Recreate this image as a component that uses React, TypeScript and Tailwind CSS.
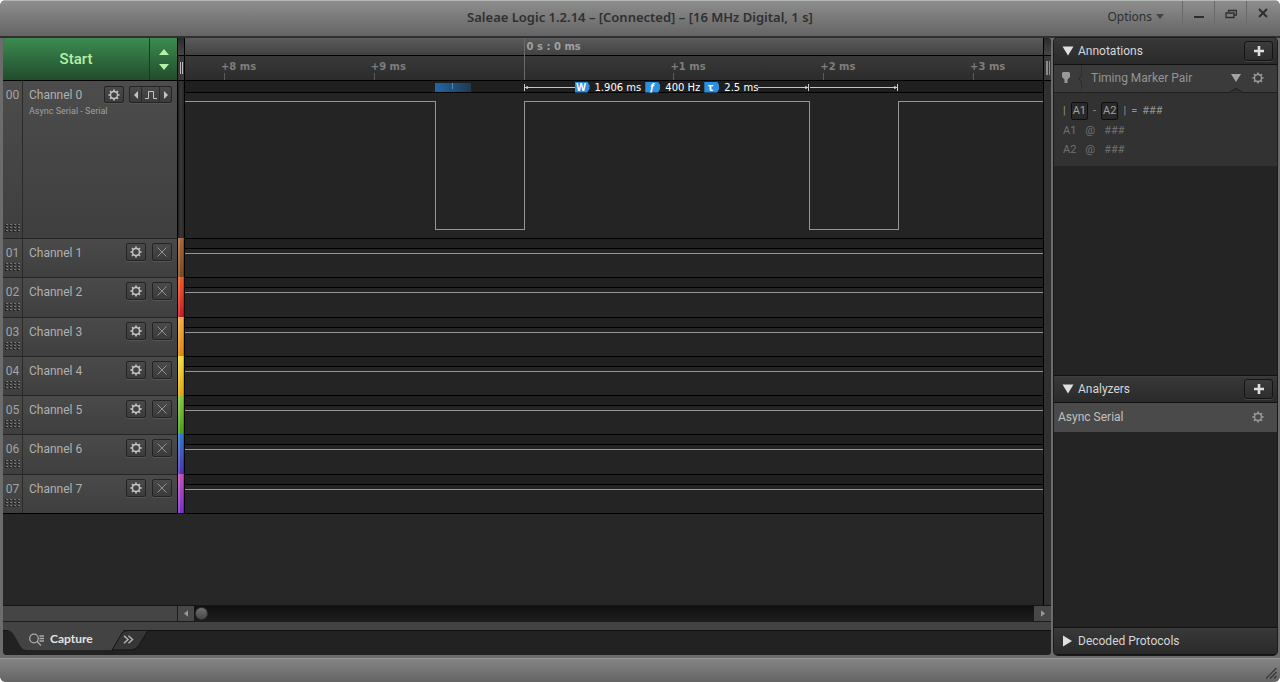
import React from "react";

const AXIS_WIDTH = 859;
const percent = (x: number) => `${(x / AXIS_WIDTH) * 100}%`;

const channels = [
  { id: "01", name: "Channel 1", stripe: "from-[#a8693c] to-[#7a4a22]" },
  { id: "02", name: "Channel 2", stripe: "from-[#ee5a26] to-[#c8142c]" },
  { id: "03", name: "Channel 3", stripe: "from-[#f2b23c] to-[#dd8512]" },
  { id: "04", name: "Channel 4", stripe: "from-[#f2e03c] to-[#e0a414]" },
  { id: "05", name: "Channel 5", stripe: "from-[#8ac83c] to-[#4c9a1e]" },
  { id: "06", name: "Channel 6", stripe: "from-[#2f78c8] to-[#4a32b0]" },
  { id: "07", name: "Channel 7", stripe: "from-[#c052b4] to-[#7c2cc8]" },
];

const ticks = [
  { x: 39, label: "+8 ms" },
  { x: 189, label: "+9 ms" },
  { x: 489, label: "+1 ms" },
  { x: 639, label: "+2 ms" },
  { x: 789, label: "+3 ms" },
];

function Gear({ className = "" }: { className?: string }) {
  return (
    <svg viewBox="0 0 12 12" className={`size-3 ${className}`} fill="none" stroke="currentColor" aria-hidden="true">
      <circle cx="6" cy="6" r="3.500" strokeWidth="1.400" />
      {[0, 45, 90, 135, 180, 225, 270, 315].map((a) => (
        <path key={a} d="M6 2.200V.4" strokeWidth="1.700" transform={`rotate(${a} 6 6)`} />
      ))}
    </svg>
  );
}

function Grip() {
  return (
    <svg viewBox="0 0 15 8" className="h-2 w-[15px]" aria-hidden="true">
      {[0, 4, 8, 12].map((x) =>
        [0, 3, 6].map((y) => (
          <g key={`${x}-${y}`}>
            <rect x={x} y={y} width="2" height="2" fill="#242424" />
            <rect x={x + 1} y={y} width="2" height="1" fill="#777" />
          </g>
        )),
      )}
    </svg>
  );
}

const smallButton =
  "flex items-center justify-center rounded-[2px] border border-[#242424] bg-linear-to-b from-[#4a4a4a] to-[#3b3b3b] text-[#c4c4c4] shadow-[0_1px_0_#555]";

function ChannelNumber({ id }: { id: string }) {
  return (
    <div className="flex w-5 shrink-0 flex-col items-center justify-between border-r border-[#2b2b2b] pt-[6px] pb-[6px] text-[12px] leading-4 text-[#a4a4a4]">
      <span>{id}</span>
      <Grip />
    </div>
  );
}

function ChannelRow({ id, name, stripe }: { id: string; name: string; stripe: string }) {
  return (
    <div className="flex min-h-0 flex-1">
      <div className="flex w-[174px] shrink-0 border-t border-[#252525] bg-linear-to-b from-[#4a4a4a] to-[#3f3f3f]">
        <ChannelNumber id={id} />
        <div className="flex flex-1 items-start pt-[4px] pr-[5px] pl-[6px]">
          <span className="flex-1 pt-[2px] text-[12px] leading-4 text-[#b0b0b0]">{name}</span>
          <button aria-label={`${name} settings`} className={`${smallButton} h-[18px] w-5`}>
            <Gear />
          </button>
          <button aria-label={`Hide ${name}`} className={`${smallButton} ml-[6px] h-[18px] w-5`}>
            <svg viewBox="0 0 10 10" className="size-[10px]" stroke="#929292" aria-hidden="true">
              <path d="M.5.5l9 9M9.500.5l-9 9" />
            </svg>
          </button>
        </div>
      </div>
      <div className="w-2 shrink-0 border-x border-black bg-black">
        <div className={`h-full border-r border-l-2 border-r-black/20 border-l-white/15 bg-linear-to-b ${stripe}`} />
      </div>
      <div className="flex-1 border-t border-black bg-[#242424]">
        <div className="h-[10px] border-b border-black bg-[#202020]" />
        <div className="h-1" />
        <div className="h-px bg-[#969696]" />
      </div>
    </div>
  );
}

function Tag({ children }: { children: React.ReactNode }) {
  return (
    <span className="flex h-[11px] w-[15px] items-center justify-center bg-[#2d8fe0] pr-[2px] font-['Noto_Sans',sans-serif] text-[10px] leading-[10px] font-bold text-white [clip-path:polygon(0_0,85%_0,100%_35%,100%_65%,85%_100%,0_100%)]">
      {children}
    </span>
  );
}

function PanelHeader({ title, add = false }: { title: string; add?: boolean }) {
  return (
    <div className="flex h-[27px] shrink-0 items-center justify-between border-y border-t-[#3d3d3d] border-b-[#111] bg-linear-to-b from-[#383838] to-[#2a2a2a] pr-1 pb-px pl-2">
      <button className="flex items-center gap-[4px] text-[12px] leading-4 text-[#d6d6d6]">
        <svg viewBox="0 0 12 12" className="size-3 fill-[#e0e0e0]" aria-hidden="true">
          {add ? <path d="M.5 1.500h11L6 10.500z" /> : <path d="M1 .5v11L10 6z" />}
        </svg>
        {title}
      </button>
      {add && (
        <button
          aria-label={`Add to ${title}`}
          className="flex h-5 w-[29px] items-center justify-center rounded-[3px] border border-[#151515] bg-linear-to-b from-[#3c3c3c] to-[#2d2d2d] shadow-[0_1px_0_#444]"
        >
          <svg viewBox="0 0 10 10" className="size-[10px] fill-[#dedede]" aria-hidden="true">
            <path d="M3.700 0h2.600v3.700H10v2.600H6.300V10H3.700V6.300H0V3.700h3.700z" />
          </svg>
        </button>
      )}
    </div>
  );
}

function TitleBar() {
  const control = "flex h-[23px] w-8 items-center justify-center border-l border-[#686868] text-[#2e2e2e]";
  return (
    <header className="relative flex h-9 shrink-0 items-start justify-end border-t border-[#b4b8b4] bg-linear-to-b from-[#8e8e8e] to-[#646464] pr-[2px] font-['Noto_Sans',sans-serif]">
      <h1 className="absolute inset-x-0 top-[7px] text-center text-[13px] leading-[18px] font-semibold text-[#303030]">
        Saleae Logic 1.2.14 – [Connected] – [16 MHz Digital, 1 s]
      </h1>
      <button className="relative mr-[18px] flex h-[31px] items-center gap-1 text-[12px] text-[#2e2e2e]">
        Options
        <svg viewBox="0 0 8 5" className="h-[5px] w-2 fill-[#444]" aria-hidden="true">
          <path d="M0 0h8L4 5z" />
        </svg>
      </button>
      <button aria-label="Minimize" className={`relative ${control}`}>
        <svg viewBox="0 0 12 12" className="size-3" fill="currentColor" aria-hidden="true">
          <path d="M1 9h10v2H1z" />
        </svg>
      </button>
      <button aria-label="Restore" className={`relative ${control}`}>
        <svg viewBox="0 0 12 12" className="size-3" fill="none" stroke="currentColor" strokeWidth="1.300" aria-hidden="true">
          <path d="M3.500 5V3.500h8v4.500H9.500M1 6h8v4.500H1z" />
        </svg>
      </button>
      <button aria-label="Close" className={`relative ${control}`}>
        <svg viewBox="0 0 12 12" className="size-3" stroke="currentColor" strokeWidth="2" aria-hidden="true">
          <path d="M2 2l8 8M10 2l-8 8" />
        </svg>
      </button>
    </header>
  );
}

function Ruler() {
  return (
    <div className="relative flex-1 font-['DejaVu_Sans',sans-serif] text-[10px] leading-3 font-bold text-[#7e7e7e]">
      <div className="h-[18px] border-b border-black bg-linear-to-b from-[#5b5b5b] to-[#424242]" />
      <div className="h-[25px] border-b border-black bg-linear-to-b from-[#393939] to-[#2c2c2c]" />
      <div className="absolute top-0 bottom-px border-l border-[#6a6a6a] pt-[3px] pl-[2px] text-[#a0a0a0]" style={{ left: percent(339) }}>
        0 s : 0 ms
      </div>
      {ticks.map((t) => (
        <div key={t.label} className="absolute top-[23px] -ml-[3px]" style={{ left: percent(t.x) }}>
          {t.label}
          <div className="ml-[3px] h-[7px] w-px bg-[#5a5a5a]" />
        </div>
      ))}
    </div>
  );
}

function Waveform() {
  return (
    <div className="relative flex-1 bg-[#242424]">
      <div className="h-3 border-b border-black bg-[#1f1f1f]" />
      <svg
        viewBox="0 0 859 145"
        preserveAspectRatio="none"
        className="h-[145px] w-full"
        fill="none"
        stroke="#969696"
        shapeRendering="crispEdges"
        aria-hidden="true"
      >
        <path d="M0 8.500H250.500V136.500H339.500V8.500H625.500V136.500H714.500V8.500H859" vectorEffect="non-scaling-stroke" />
      </svg>
      <div className="absolute top-[2px] h-[9px] w-9 bg-linear-to-r from-[#1f67a5] to-[#20384f]" style={{ left: percent(250) }}>
        <div className="ml-[17px] h-1.5 w-px bg-[#4a8dc4]" />
      </div>
      <div
        className="absolute top-0 flex h-3 items-center font-['DejaVu_Sans',sans-serif] text-[10px] leading-3 text-white"
        style={{ left: percent(339), width: percent(286) }}
      >
        <svg viewBox="0 0 6 7" className="h-[7px] w-[6px] shrink-0" stroke="#ccc" fill="#ccc" aria-hidden="true">
          <path d="M.5 0v7M1 3.500h5M1.500 3.500l2-1v2z" />
        </svg>
        <div className="h-px flex-1 bg-[#c4c4c4]" />
        <Tag>W</Tag>
        <span className="mr-1 ml-[5px] pt-[2px]">1.906 ms</span>
        <Tag>
          <i>f</i>
        </Tag>
        <span className="mr-1 ml-[5px] pt-[2px]">400 Hz</span>
        <Tag>τ</Tag>
        <span className="ml-[5px] pt-[2px]">2.5 ms</span>
        <div className="h-px flex-1 bg-[#c4c4c4]" />
        <svg viewBox="0 0 6 7" className="h-[7px] w-[6px] shrink-0" stroke="#ccc" fill="#ccc" aria-hidden="true">
          <path d="M5.500 0v7M0 3.500h5M4.500 3.500l-2-1v2z" />
        </svg>
      </div>
      <div className="absolute top-0 flex h-3 items-center" style={{ left: percent(626), width: percent(88) }}>
        <div className="h-px flex-1 bg-[#c4c4c4]" />
        <svg viewBox="0 0 6 7" className="h-[7px] w-[6px] shrink-0" stroke="#ccc" fill="#ccc" aria-hidden="true">
          <path d="M5.500 0v7M0 3.500h5M4.500 3.500l-2-1v2z" />
        </svg>
      </div>
    </div>
  );
}

function Capture() {
  return (
    <main className="flex min-w-0 flex-1 flex-col overflow-hidden rounded-[4px] bg-[#272727]">
      <div className="flex min-h-0 flex-1">
        <div className="flex min-w-0 flex-1 flex-col">
          <div className="flex h-[43px] shrink-0">
            <div className="flex w-[174px] border-b border-black bg-linear-to-b from-[#3c8c50] via-[#2f6b3f] to-[#214d2b] text-[#b4f0a8]">
              <button className="w-[147px] border-r border-[#193d21] text-[15px] font-medium">Start</button>
              <div className="flex flex-1 flex-col items-center justify-center gap-[9px]">
                <button aria-label="Increase duration">
                  <svg viewBox="0 0 10 6" className="h-[6px] w-[10px] fill-current" aria-hidden="true"><path d="M0 6h10L5 0z" /></svg>
                </button>
                <button aria-label="Decrease duration">
                  <svg viewBox="0 0 10 6" className="h-[6px] w-[10px] fill-current" aria-hidden="true"><path d="M0 0h10L5 6z" /></svg>
                </button>
              </div>
            </div>
            <div className="w-2 border-x border-black">
              <div className="h-[18px] border-b border-black bg-linear-to-b from-[#2b2b2b] to-[#454545]" />
              <div className="flex h-[25px] items-center justify-center gap-px border-b border-black bg-[#393939]">
                <div className="h-3 w-px bg-[#b8b8b8]" />
                <div className="h-3 w-px bg-[#b8b8b8]" />
              </div>
            </div>
            <Ruler />
          </div>

          <div className="flex h-[157px] shrink-0">
            <div className="flex w-[174px] shrink-0 bg-linear-to-b from-[#4c4c4c] to-[#3f3f3f]">
              <ChannelNumber id="00" />
              <div className="flex-1 pt-[5px] pr-[5px] pl-[6px]">
                <div className="flex items-start">
                  <span className="flex-1 pt-px text-[12px] leading-4 text-[#b0b0b0]">Channel 0</span>
                  <button aria-label="Channel 0 settings" className={`${smallButton} h-[17px] w-5`}>
                    <Gear />
                  </button>
                  <div className={`${smallButton} ml-[5px] h-[17px] w-[43px]`}>
                    <button aria-label="Previous edge" className="flex h-full w-3 items-center justify-center border-r border-[#2b2b2b]">
                      <svg viewBox="0 0 4 8" className="h-2 w-1 fill-current" aria-hidden="true"><path d="M4 0v8L0 4z" /></svg>
                    </button>
                    <button aria-label="Pulse trigger" className="flex h-full flex-1 items-center justify-center border-r border-[#2b2b2b]">
                      <svg viewBox="0 0 12 8" className="h-2 w-3" fill="none" stroke="currentColor" aria-hidden="true"><path d="M0 7.500h3.500v-7h5v7H12" /></svg>
                    </button>
                    <button aria-label="Next edge" className="flex h-full w-[11px] items-center justify-center">
                      <svg viewBox="0 0 4 8" className="h-2 w-1 fill-current" aria-hidden="true"><path d="M0 0v8l4-4z" /></svg>
                    </button>
                  </div>
                </div>
                <div className="pt-[2px] text-[9px] leading-3 text-[#a0a0a0]">Async Serial - Serial</div>
              </div>
            </div>
            <div className="w-2 shrink-0 border-x border-black bg-linear-to-r from-[#222] via-[#3a3a3a] to-[#262626]" />
            <Waveform />
          </div>

          <div className="flex h-[275px] shrink-0 flex-col">
            {channels.map((c) => (
              <ChannelRow key={c.id} {...c} />
            ))}
          </div>
          <div className="flex-1 border-t border-black" />
        </div>
        <div className="flex w-2 shrink-0 flex-col border-l border-black bg-[#303030]">
          <div className="h-[18px] border-b border-black bg-linear-to-b from-[#2b2b2b] to-[#454545]" />
          <div className="flex h-[25px] items-center justify-center gap-px border-b border-black bg-[#393939]">
            <div className="h-[14px] w-[2px] bg-[#8a8a8a]" />
            <div className="h-[14px] w-px bg-[#8a8a8a]" />
          </div>
        </div>
      </div>

      <div className="flex h-[15px] shrink-0 bg-[#454545] shadow-[0_-1px_0_#151515]">
        <div className="w-[175px] border-r border-[#1c1c1c]" />
        <button aria-label="Scroll left" className="flex w-4 items-center justify-center bg-[#484848]">
          <svg viewBox="0 0 5 8" className="h-[7px] w-1 fill-[#999]" aria-hidden="true"><path d="M5 0v8L0 4z" /></svg>
        </button>
        <div className="flex flex-1 items-center bg-linear-to-b from-[#101010] to-[#1e1e1e]">
          <div className="ml-px size-[13px] rounded-full border border-[#333] bg-linear-to-b from-[#707070] to-[#484848]" />
        </div>
        <button aria-label="Scroll right" className="flex w-[17px] items-center justify-center bg-[#484848]">
          <svg viewBox="0 0 5 8" className="h-[7px] w-1 fill-[#999]" aria-hidden="true"><path d="M0 0v8l5-4z" /></svg>
        </button>
      </div>

      <div className="h-[9px] shrink-0 border-t border-[#1c1c1c] bg-[#434343]" />
      <div className="relative flex h-[25px] shrink-0 items-start bg-[#222] shadow-[inset_0_1px_0_#111]">
        <svg viewBox="0 0 150 25" className="absolute top-0 left-0 h-[25px] w-[150px]" aria-hidden="true">
          <path d="M4 0Q9 1 11 5L18 17Q20 20 24 20H109L121 0z" fill="#434343" />
          <path d="M109 20L119 3Q121 .5 125 .5H145L136 15Q133 20 128 20z" fill="#363636" stroke="#151515" />
        </svg>
        <button className="relative ml-[26px] flex h-[18px] items-center gap-[6px] font-[Lato,sans-serif] text-[12px] font-bold text-[#e2e2e2]">
          <svg viewBox="0 0 15 13" className="h-[13px] w-[15px]" fill="none" stroke="#aaa" strokeWidth="1.300" aria-hidden="true">
            <circle cx="5" cy="5.500" r="4.300" />
            <path d="M8 8.500l4 4M10.500 3H15M10.500 5.500H15M10.500 8H15" />
          </svg>
          Capture
        </button>
        <button aria-label="More tabs" className="relative ml-[30px] flex h-[19px] items-center">
          <svg viewBox="0 0 11 9" className="h-[9px] w-[11px]" fill="none" stroke="#b0b0b0" strokeWidth="1.500" aria-hidden="true">
            <path d="M1 .7l4 3.800-4 3.800M5.500.7l4 3.800-4 3.800" />
          </svg>
        </button>
      </div>
    </main>
  );
}

function Sidebar() {
  const marker = "rounded-[2px] border border-[#0e0e0e] bg-[#292929] px-px text-[#a0a0a0]";
  return (
    <aside className="flex w-[223px] shrink-0 flex-col overflow-hidden rounded-[4px] bg-[#242424] shadow-[0_0_0_1px_#1c1c1c]">
      <section className="flex grow-[338] basis-0 flex-col">
        <PanelHeader title="Annotations" add />
        <div className="relative flex h-7 shrink-0 items-center border-b border-[#202020] bg-[#3b3b3b] pb-px">
          <div className="flex h-full w-7 items-center border-r border-[#303030] pl-2">
            <svg viewBox="0 0 8 12" className="h-3 w-2 fill-[#999]" aria-hidden="true">
              <path d="M1 0h6l1 1v4L5.500 7.500V11h-3V7.500L0 5V1z" />
            </svg>
          </div>
          <svg viewBox="0 0 4 8" className="absolute top-[10px] left-6 h-2 w-1" fill="#3b3b3b" stroke="#2a2a2a" aria-hidden="true">
            <path d="M4 0L1 4l3 4" />
          </svg>
          <select
            aria-label="Annotation type"
            className="h-full flex-1 appearance-none bg-transparent pl-[9px] text-[12px] text-[#949494] outline-none"
          >
            <option>Timing Marker Pair</option>
          </select>
          <svg viewBox="0 0 10 8" className="pointer-events-none mr-[11px] h-2 w-[10px] fill-[#a4a4a4]" aria-hidden="true">
            <path d="M0 0h10L5 8z" />
          </svg>
          <button aria-label="Annotation settings" className="mr-[13px] text-[#999]"><Gear /></button>
          <svg viewBox="0 0 14 5" className="absolute right-[34px] -bottom-px h-[5px] w-[14px]" fill="#333" stroke="#202020" aria-hidden="true">
            <path d="M0 4.500l7-4 7 4" />
          </svg>
        </div>
        <div className="h-[73px] shrink-0 bg-[#323232] pt-[8px] pl-[9px] text-[11px] leading-4 text-[#707070]">
          <div className="mb-px flex h-[19px] items-center gap-[5px] text-[#949494]">
            <span>|</span><span className={marker}>A1</span><span>-</span><span className={marker}>A2</span>
            <span>|</span><span>=</span><span>###</span>
          </div>
          <div className="flex h-[19px] items-center gap-[9px]"><span>A1</span><span>@</span><span>###</span></div>
          <div className="flex h-5 items-center gap-[9px]"><span>A2</span><span>@</span><span>###</span></div>
        </div>
      </section>
      <section className="flex grow-[252] basis-0 flex-col border-t border-[#111]">
        <PanelHeader title="Analyzers" add />
        <div className="flex h-[29px] shrink-0 items-center justify-between bg-[#4a4a4a] pr-[13px] pl-1 text-[12px] text-[#c0c0c0]">
          Async Serial
          <button aria-label="Async Serial settings" className="flex text-[#999]"><Gear /></button>
        </div>
      </section>
      <section className="border-t border-[#111]">
        <PanelHeader title="Decoded Protocols" />
      </section>
    </aside>
  );
}

export default function App() {
  return (
    <div className="flex h-screen min-h-[600px] min-w-[900px] flex-col overflow-hidden rounded-[6px] bg-[#6c6c6c] font-[Roboto,sans-serif]">
      <TitleBar />
      <div className="flex min-h-0 flex-1 gap-[3px] border-t-2 border-t-[#303030] px-[3px] pb-[3px]">
        <Capture />
        <Sidebar />
      </div>
      <footer className="flex h-6 shrink-0 items-end justify-end border-t border-[#969696] bg-linear-to-b from-[#858585] to-[#646464] p-[3px]">
        <svg viewBox="0 0 11 11" className="size-[11px]" fill="none" stroke="#333" strokeWidth="1.200" aria-hidden="true">
          <path d="M0 10.500L10.500 0M4 10.500L10.500 4M8 10.500l2.500-2.500" />
        </svg>
      </footer>
    </div>
  );
}
